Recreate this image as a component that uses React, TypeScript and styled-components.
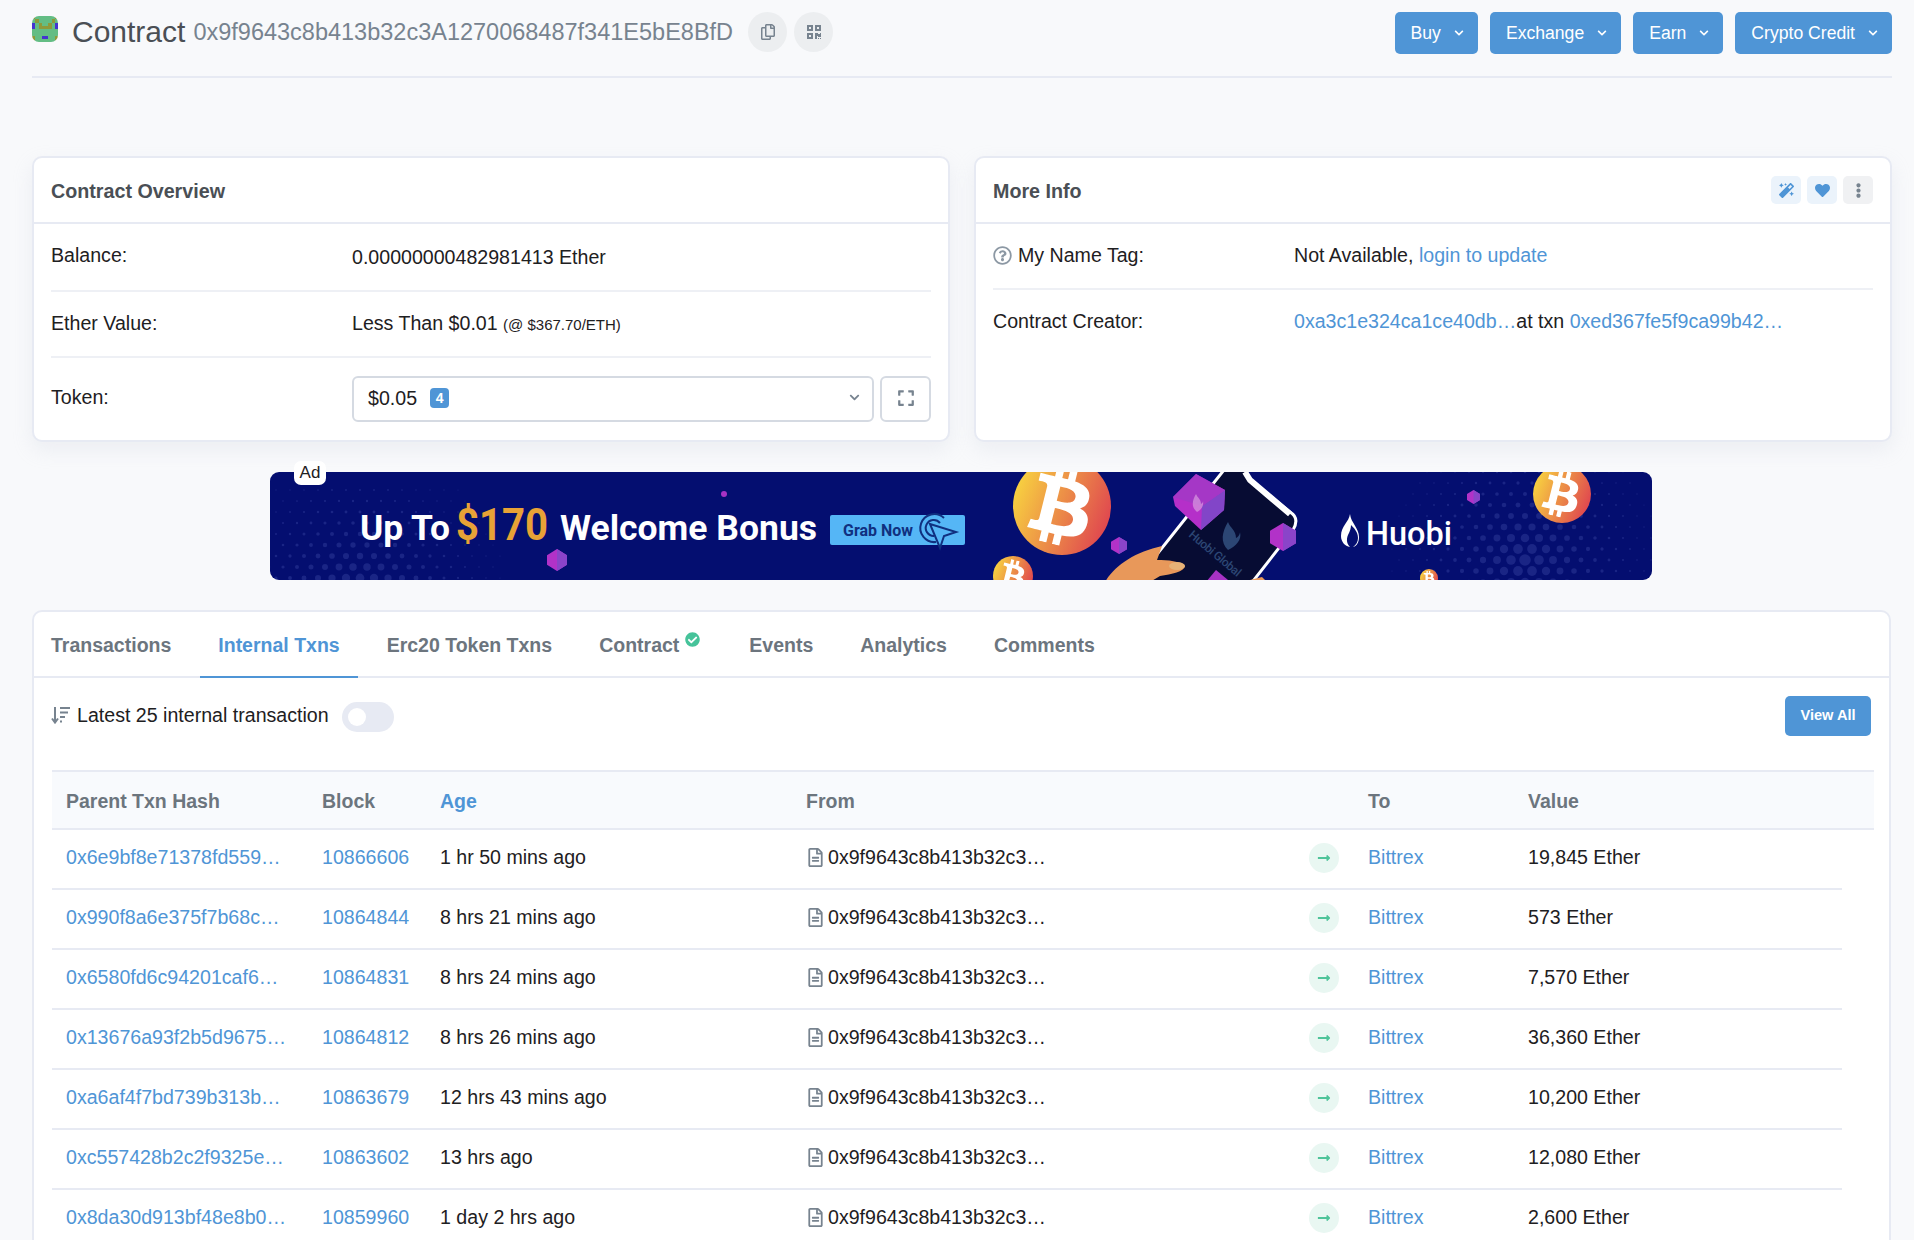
import styled, { createGlobalStyle } from 'styled-components'
import {
  FaBtc,
  FaCheckCircle,
  FaChevronDown,
  FaEllipsisV,
  FaExpand,
  FaHeart,
  FaLongArrowAltRight,
  FaMagic,
  FaQrcode,
  FaRegCopy,
  FaRegFileAlt,
  FaRegQuestionCircle,
} from 'react-icons/fa'

const blue = '#4f95d6'
const line = '#e7eaf3'

const GlobalStyle = createGlobalStyle`
  html, body {
    margin: 0;
    padding: 0;
    height: 1240px;
    overflow: hidden;
    background: #f8f9fb;
  }
  body {
    font-family: "Liberation Sans", Arial, sans-serif;
    font-size: 19.6px;
    color: #1e2022;
  }
  * { box-sizing: border-box; }
`

const Page = styled.div`
  padding: 0 22px 0 32px;
  height: 1240px;
  overflow: hidden;
`

const Header = styled.header`
  display: flex;
  justify-content: space-between;
  align-items: flex-start;
  height: 78px;
  padding-top: 12px;
  border-bottom: 2px solid ${line};
`

const TitleGroup = styled.div`
  display: flex;
  align-items: center;
  height: 40px;
`

const Identicon = styled.svg`
  width: 26px;
  height: 26px;
  border-radius: 7px;
  margin: 0 14px 6px 0;
`

const TitleText = styled.h1`
  margin: 0 8px 0 0;
  font-size: 30px;
  font-weight: 400;
  color: #4a4f55;
`

const Address = styled.span`
  font-size: 23.5px;
  color: #77838f;
  margin: 1px 15px 0 0;
`

const RoundButton = styled.button`
  display: flex;
  align-items: center;
  justify-content: center;
  width: 39px;
  height: 40px;
  margin-right: 7px;
  padding: 0;
  border: 0;
  border-radius: 50%;
  background: #eceef0;
  color: #77838f;
  font-size: 16px;
`

const Actions = styled.div`
  display: flex;
  gap: 12px;
`

const ActionButton = styled.button`
  display: flex;
  align-items: center;
  gap: 13px;
  height: 42px;
  padding: 0 14px 0 16px;
  border: 0;
  border-radius: 5px;
  background: ${blue};
  color: #fff;
  font-family: inherit;
  font-size: 17.6px;
  svg { font-size: 10px; }
`

const Cards = styled.section`
  display: grid;
  grid-template-columns: 918px 918px;
  gap: 24px;
  margin-top: 78px;
  height: 286px;
`

const Card = styled.div`
  background: #fff;
  border: 2px solid ${line};
  border-radius: 10px;
  box-shadow: 0 8px 20px rgba(189, 197, 209, 0.2);
  overflow: hidden;
`

const CardHead = styled.div`
  display: flex;
  align-items: center;
  justify-content: space-between;
  height: 66px;
  padding: 0 17px;
  border-bottom: 2px solid ${line};
`

const CardTitle = styled.h2`
  margin: 2px 0 0;
  font-size: 19.7px;
  font-weight: 700;
  color: #4a4f55;
`

const CardTools = styled.div`
  display: flex;
  gap: 6px;
`

const ToolButton = styled.button<{ $muted?: boolean }>`
  display: flex;
  align-items: center;
  justify-content: center;
  width: 30px;
  height: 28px;
  padding: 0;
  border: 0;
  border-radius: 5px;
  background: ${p => (p.$muted ? '#f0f1f3' : '#ebf3fb')};
  color: ${p => (p.$muted ? '#77838f' : blue)};
  font-size: 15px;
`

const CardBody = styled.div`
  padding: 0 17px;
`

const InfoRow = styled.div<{ $height: number; $col: number; $last?: boolean }>`
  display: grid;
  grid-template-columns: ${p => p.$col}px 1fr;
  height: ${p => p.$height}px;
  padding-top: 17px;
  line-height: 28px;
  border-bottom: ${p => (p.$last ? '0' : '2px solid #eef0f5')};
`

const LabelCell = styled.div`
  display: flex;
  align-items: center;
  height: 28px;
`

const TokenLabel = styled(LabelCell)`
  margin-top: 8px;
`

const HelpIcon = styled(FaRegQuestionCircle)`
  color: #8c98a4;
  font-size: 19px;
  margin-right: 6px;
`

const ValueCell = styled.div<{ $shift?: number }>`
  margin-top: ${p => p.$shift || 0}px;
  white-space: nowrap;
`

const Small = styled.span`
  font-size: 15px;
`

const Link = styled.a`
  color: ${blue};
  text-decoration: none;
`

const TokenControls = styled.div`
  display: flex;
  gap: 6px;
  margin-top: 1px;
`

const TokenSelect = styled.div`
  display: flex;
  align-items: center;
  width: 522px;
  height: 46px;
  padding: 0 12px 3px 14px;
  background: #fff;
  border: 2px solid #d5dae2;
  border-radius: 6px;
  svg { margin-left: auto; color: #77838f; font-size: 11px; }
`

const Badge = styled.span`
  display: flex;
  align-items: center;
  justify-content: center;
  width: 19px;
  height: 20px;
  margin: 1px 0 0 13px;
  border-radius: 4px;
  background: ${blue};
  color: #fff;
  font-size: 14px;
  font-weight: 700;
`

const ExpandButton = styled.button`
  display: flex;
  align-items: center;
  justify-content: center;
  width: 51px;
  height: 46px;
  padding: 0 0 3px;
  background: #fff;
  border: 2px solid #d5dae2;
  border-radius: 6px;
  color: #77838f;
  font-size: 18px;
`

const AdBox = styled.div`
  position: relative;
  width: 1382px;
  height: 108px;
  margin: 30px 0 30px 238px;
`

const AdArt = styled.svg`
  display: block;
  width: 1382px;
  height: 108px;
  border-radius: 9px;
`

const AdTag = styled.span`
  position: absolute;
  left: 24px;
  top: -11px;
  width: 32px;
  height: 24px;
  border-radius: 7px;
  background: #fff;
  font-size: 17px;
  line-height: 24px;
  text-align: center;
`

const TabCard = styled(Card)`
  height: 800px;
  margin-right: 1px;
  box-shadow: none;
`

const TabBar = styled.nav`
  display: flex;
  gap: 11px;
  height: 66px;
  padding-left: 0;
  margin-left: -1px;
  border-bottom: 2px solid ${line};
`

const Tab = styled.a<{ $active?: boolean }>`
  display: flex;
  align-items: flex-start;
  height: 66px;
  padding: 18px 18px 0;
  line-height: 30px;
  font-size: 19.5px;
  font-weight: 700;
  color: ${p => (p.$active ? blue : '#6c757e')};
  border-bottom: 2px solid ${p => (p.$active ? blue : 'transparent')};
`

const TabCheck = styled(FaCheckCircle)`
  margin: 2px 2px 0 6px;
  color: #46c39a;
  font-size: 15px;
`

const Toolbar = styled.div`
  display: flex;
  align-items: center;
  height: 92px;
  padding: 0 18px 18px 17px;
`

const SortIcon = styled.svg`
  width: 20px;
  height: 20px;
  margin-right: 6px;
  color: #77838f;
`

const Toggle = styled.span`
  display: flex;
  align-items: center;
  width: 52px;
  height: 30px;
  margin: 4px 0 0 13px;
  padding-left: 6px;
  border-radius: 15px;
  background: ${line};
`

const Knob = styled.span`
  width: 18px;
  height: 18px;
  border-radius: 50%;
  background: #fff;
`

const ViewAll = styled.button`
  height: 40px;
  width: 86px;
  margin: 2px 0 0 auto;
  padding: 0 0 2px;
  border: 0;
  border-radius: 5px;
  background: ${blue};
  color: #fff;
  font-family: inherit;
  font-size: 14.6px;
  font-weight: 700;
`

const Table = styled.div`
  margin: 0 15px 0 18px;
`

const columns = '256px 118px 366px 502px 60px 160px 1fr'

const HeadRow = styled.div`
  display: grid;
  grid-template-columns: ${columns};
  height: 60px;
  padding-top: 2px;
  align-items: center;
  background: #f8fafd;
  border-top: 2px solid ${line};
  border-bottom: 2px solid ${line};
  font-size: 19.5px;
  font-weight: 700;
  color: #6c757e;
`

const BodyRow = styled.div`
  display: grid;
  grid-template-columns: ${columns};
  width: 1790px;
  height: 60px;
  padding-bottom: 4px;
  align-items: center;
  border-bottom: 2px solid ${line};
`

const Cell = styled.div`
  padding-left: 14px;
  white-space: nowrap;
`

const AddressCell = styled(Cell)`
  display: flex;
  align-items: center;
  svg { margin-right: 3px; color: #77838f; font-size: 19px; }
`

const ArrowCell = styled.div`
  display: flex;
  justify-content: center;
  margin-top: 2px;
`

const ArrowBubble = styled.span`
  display: flex;
  align-items: center;
  justify-content: center;
  width: 30px;
  height: 30px;
  border-radius: 50%;
  background: #e9f7f2;
  color: #4fc49a;
  font-size: 14px;
`

const green = '#63bd84'
const olive = '#8e9a3a'
const indigo = '#4433d0'

const identicon = [
  'oggggggo',
  'goggggog',
  'bgoggogb',
  'bgoooogb',
  'gggggggg',
  'gggggggg',
  'oggbbggo',
  'oggggggo',
]

const swatch: Record<string, string> = { g: green, o: olive, b: indigo }

const actions = ['Buy', 'Exchange', 'Earn', 'Crypto Credit']

const tabs = ['Transactions', 'Internal Txns', 'Erc20 Token Txns', 'Contract', 'Events', 'Analytics', 'Comments']

const txns = [
  ['0x6e9bf8e71378fd559…', '10866606', '1 hr 50 mins ago', '19,845 Ether'],
  ['0x990f8a6e375f7b68c…', '10864844', '8 hrs 21 mins ago', '573 Ether'],
  ['0x6580fd6c94201caf6…', '10864831', '8 hrs 24 mins ago', '7,570 Ether'],
  ['0x13676a93f2b5d9675…', '10864812', '8 hrs 26 mins ago', '36,360 Ether'],
  ['0xa6af4f7bd739b313b…', '10863679', '12 hrs 43 mins ago', '10,200 Ether'],
  ['0xc557428b2c2f9325e…', '10863602', '13 hrs ago', '12,080 Ether'],
  ['0x8da30d913bf48e8b0…', '10859960', '1 day 2 hrs ago', '2,600 Ether'],
]

// halftone patches behind the ad art
function halftone(cx: number, cy: number, spread: number) {
  const dots = []
  for (let row = -10; row <= 10; row++) {
    for (let col = -14; col <= 14; col++) {
      const x = cx + col * 14 + (row % 2 ? 7 : 0)
      const y = cy + row * 11
      const d = Math.hypot(x - cx, y - cy) / spread
      if (d < 1) {
        dots.push(<circle key={`${row}-${col}`} cx={x} cy={y} r={0.6 + 5.2 * (1 - d) * (1 - d)} fill="#3a46a3" opacity={0.42} />)
      }
    }
  }
  return dots
}

function Coin({ cx, cy, r, tilt = 14 }: { cx: number; cy: number; r: number; tilt?: number }) {
  const size = r * 1.6
  return (
    <g>
      <circle cx={cx} cy={cy} r={r} fill="url(#coinA)" />
      <g transform={`rotate(${tilt} ${cx} ${cy})`}>
        <FaBtc x={cx - size / 2} y={cy - size / 2} size={size} color="#fff" />
      </g>
    </g>
  )
}

function Diamond({ x, y, w, h }: { x: number; y: number; w: number; h: number }) {
  return (
    <g>
      <polygon points={`${x},${y + h * 0.28} ${x + w * 0.5},${y} ${x + w},${y + h * 0.28} ${x + w},${y + h * 0.72} ${x + w * 0.5},${y + h} ${x},${y + h * 0.72}`} fill="#b232c8" />
      <polygon points={`${x + w * 0.5},${y} ${x + w},${y + h * 0.28} ${x + w},${y + h * 0.72} ${x + w * 0.5},${y + h}`} fill="#8a44c9" />
    </g>
  )
}

function AdBanner() {
  const font = 'Roboto, "Liberation Sans", sans-serif'
  return (
    <AdArt viewBox="270 472 1382 108">
      <defs>
        <linearGradient id="coinA" x1="0" x2="1" y1="0.2" y2="0.6">
          <stop offset="0" stopColor="#f9d93f" />
          <stop offset="1" stopColor="#e0484f" />
        </linearGradient>
      </defs>
      <rect x="270" y="472" width="1382" height="108" fill="#040e70" />
      {halftone(360, 600, 150)}
      {halftone(1525, 560, 140)}

      <text x="360" y="540" fontFamily={font} fontWeight="700" fontSize="35" fill="#fff" textLength="90" lengthAdjust="spacingAndGlyphs">Up To</text>
      <text x="456" y="540" fontFamily={font} fontWeight="700" fontSize="44" fill="#e8a236" textLength="92" lengthAdjust="spacingAndGlyphs">$170</text>
      <text x="560" y="540" fontFamily={font} fontWeight="700" fontSize="35" fill="#fff" textLength="257" lengthAdjust="spacingAndGlyphs">Welcome Bonus</text>

      <rect x="830" y="515" width="135" height="30" rx="2" fill="#55b6f6" />
      <text x="843" y="536" fontFamily={font} fontWeight="700" fontSize="17" fill="#103080" textLength="70" lengthAdjust="spacingAndGlyphs">Grab Now</text>
      <g fill="none" stroke="#103080" strokeWidth="2">
        <path d="M936 542a14 14 0 1 1 8-24" />
        <path d="M934 536a8 8 0 1 1 6-13" />
      </g>
      <polygon points="930,524 956,532 944,536 940,548" fill="#55b6f6" stroke="#103080" strokeWidth="2" />

      <circle cx="724" cy="494" r="3" fill="#a732c4" />
      <Diamond x={547} y={549} w={20} h={22} />

      <Coin cx={1062} cy={506} r={49} />
      <Coin cx={1013} cy={576} r={20} />
      <Coin cx={1562} cy={494} r={29} />
      <Coin cx={1429} cy={578} r={9} tilt={0} />
      <Diamond x={1111} y={537} w={16} h={17} />
      <Diamond x={1467} y={490} w={13} h={14} />

      <path d="M1224 470L1150 563L1140 585H1250L1293 530Q1300 518 1290 512L1250 480L1245 470Z" fill="#070c33" stroke="#fff" strokeWidth="3" />
      <path d="M1245 472L1250 480L1290 514" fill="none" stroke="#fff" strokeWidth="6" />
      <path d="M1228 550c-8-8-6-18 0-28c2 6 8 8 8 16c4-2 4-6 4-6c2 8-4 14-12 18z" fill="#2c4674" />
      <text x="1188" y="536" transform="rotate(40 1188 536)" fontFamily={font} fontWeight="500" fontSize="12" fill="#2c4674" textLength="64">Huobi Global</text>
      <polygon points="1206,582 1216,570 1228,580 1228,585 1206,585" fill="#a732c4" />

      <polygon points="1173,497 1196,474 1225,490 1224,510 1201,530 1175,506" fill="#b52fc9" />
      <polygon points="1225,490 1224,510 1201,530 1202,506" fill="#8245c8" />
      <polygon points="1173,497 1196,474 1225,490 1202,506" fill="#a238c6" opacity="0.85" />
      <path d="M1197 512c-6-5-5-11-1-18c1 3 5 5 5 10c2-1 2-3 2-3c1 5-2 9-6 11z" fill="#d99ae0" opacity="0.7" />
      <Diamond x={1270} y={523} w={26} h={28} />

      <path d="M1105 582C1115 565 1135 552 1162 546L1157 560C1168 560 1180 561 1185 566C1184 572 1172 574 1160 576L1150 582Z" fill="#e8985a" />
      <ellipse cx="1177" cy="566" rx="8" ry="4" fill="#e6b277" />
      <path d="M1250 580L1262 577L1266 581Z" fill="#e8985a" />

      <path d="M1350 514c-1 8-9 12-9 22c0 6 4 10 9 11c-3-3-4-7-2-12c2-4 3-7 3-10c3 3 7 7 7 13c0 4-2 7-5 9c4-1 6-5 6-10c0-9-8-14-9-23z" fill="#fff" />
      <text x="1366" y="545" fontFamily={font} fontWeight="500" fontSize="34" fill="#fff" textLength="86" lengthAdjust="spacingAndGlyphs">Huobi</text>
    </AdArt>
  )
}

function App() {
  return (
    <>
      <GlobalStyle />
      <Page>
        <Header>
          <TitleGroup>
            <Identicon viewBox="0 0 8 8" shapeRendering="crispEdges">
              {identicon.map((row, y) =>
                row.split('').map((c, x) => <rect key={`${x}-${y}`} x={x} y={y} width="1" height="1" fill={swatch[c]} />)
              )}
            </Identicon>
            <TitleText>Contract</TitleText>
            <Address>0x9f9643c8b413b32c3A1270068487f341E5bE8BfD</Address>
            <RoundButton><FaRegCopy /></RoundButton>
            <RoundButton><FaQrcode /></RoundButton>
          </TitleGroup>
          <Actions>
            {actions.map(a => (
              <ActionButton key={a}>{a}<FaChevronDown /></ActionButton>
            ))}
          </Actions>
        </Header>

        <Cards>
          <Card>
            <CardHead>
              <CardTitle>Contract Overview</CardTitle>
            </CardHead>
            <CardBody>
              <InfoRow $height={68} $col={301}>
                <LabelCell>Balance:</LabelCell>
                <ValueCell $shift={2}>0.00000000482981413 Ether</ValueCell>
              </InfoRow>
              <InfoRow $height={66} $col={301}>
                <LabelCell>Ether Value:</LabelCell>
                <ValueCell>Less Than $0.01 <Small>(@ $367.70/ETH)</Small></ValueCell>
              </InfoRow>
              <InfoRow $height={81} $col={301} $last>
                <TokenLabel>Token:</TokenLabel>
                <TokenControls>
                  <TokenSelect>
                    $0.05
                    <Badge>4</Badge>
                    <FaChevronDown />
                  </TokenSelect>
                  <ExpandButton><FaExpand /></ExpandButton>
                </TokenControls>
              </InfoRow>
            </CardBody>
          </Card>

          <Card>
            <CardHead>
              <CardTitle>More Info</CardTitle>
              <CardTools>
                <ToolButton><FaMagic /></ToolButton>
                <ToolButton><FaHeart /></ToolButton>
                <ToolButton $muted><FaEllipsisV /></ToolButton>
              </CardTools>
            </CardHead>
            <CardBody>
              <InfoRow $height={66} $col={301}>
                <LabelCell><HelpIcon />My Name Tag:</LabelCell>
                <ValueCell>Not Available, <Link>login to update</Link></ValueCell>
              </InfoRow>
              <InfoRow $height={66} $col={301} $last>
                <LabelCell>Contract Creator:</LabelCell>
                <ValueCell><Link>0xa3c1e324ca1ce40db…</Link>at txn <Link>0xed367fe5f9ca99b42…</Link></ValueCell>
              </InfoRow>
            </CardBody>
          </Card>
        </Cards>

        <AdBox>
          <AdBanner />
          <AdTag>Ad</AdTag>
        </AdBox>

        <TabCard>
          <TabBar>
            {tabs.map(t => (
              <Tab key={t} $active={t === 'Internal Txns'}>
                {t}
                {t === 'Contract' && <TabCheck />}
              </Tab>
            ))}
          </TabBar>

          <Toolbar>
            <SortIcon viewBox="0 0 20 20" fill="none" stroke="currentColor" strokeWidth="2">
              <path d="M4 2v15M1 13.5L4 17.5L7 13.5" />
              <path d="M9 3h10M9 7.5h8M9 12h5M9 16.5h2" />
            </SortIcon>
            Latest 25 internal transaction
            <Toggle><Knob /></Toggle>
            <ViewAll>View All</ViewAll>
          </Toolbar>

          <Table>
            <HeadRow>
              <Cell>Parent Txn Hash</Cell>
              <Cell>Block</Cell>
              <Cell><Link>Age</Link></Cell>
              <Cell>From</Cell>
              <div />
              <Cell>To</Cell>
              <Cell>Value</Cell>
            </HeadRow>
            {txns.map(([hash, block, age, value]) => (
              <BodyRow key={hash}>
                <Cell><Link>{hash}</Link></Cell>
                <Cell><Link>{block}</Link></Cell>
                <Cell>{age}</Cell>
                <AddressCell><FaRegFileAlt />0x9f9643c8b413b32c3…</AddressCell>
                <ArrowCell><ArrowBubble><FaLongArrowAltRight /></ArrowBubble></ArrowCell>
                <Cell><Link>Bittrex</Link></Cell>
                <Cell>{value}</Cell>
              </BodyRow>
            ))}
          </Table>
        </TabCard>
      </Page>
    </>
  )
}

export default App
